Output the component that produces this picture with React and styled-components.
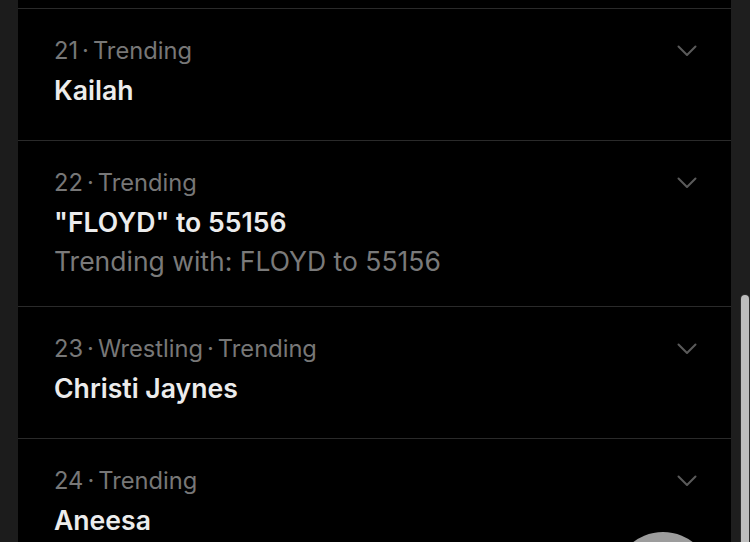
import React from "react";
import styled, { createGlobalStyle } from "styled-components";

const Global = createGlobalStyle`
  html, body { margin: 0; padding: 0; background: #1c1c1c; }
  body { width: 750px; height: 542px; overflow: hidden; font-family: Inter, "Noto Sans", "Liberation Sans", sans-serif; -webkit-font-smoothing: antialiased; }
`;

const Page = styled.div`
  position: relative;
  display: flex;
  width: 750px;
  height: 542px;
  padding-left: 18px;
  box-sizing: border-box;
  overflow: hidden;
  background: #1c1c1c;
`;

const List = styled.div`
  width: 713px;
  background: #000;
  padding-top: 8px;
  display: flex;
  flex-direction: column;
`;

const Row = styled.div`
  display: grid;
  grid-template-columns: 1fr auto;
  border-top: 1px solid #2a2a2a;
  padding: 23px 34px 29px 36px;
  flex-shrink: 0;
`;

const Texts = styled.div`
  display: flex;
  flex-direction: column;
`;

const Meta = styled.div`
  font-size: 23.7px;
  line-height: 38px;
  color: #777;
  white-space: nowrap;
`;

const Dot = styled.span`
  margin: 0 4px;
`;

const Title = styled.div`
  font-size: 26.6px;
  font-weight: 600;
  line-height: 41px;
  color: #ececec;
  white-space: nowrap;
`;

const Sub = styled.div`
  font-size: 26.5px;
  line-height: 36px;
  margin-bottom: -2px;
  color: #7a7a7a;
  white-space: nowrap;
`;

const ChevronBox = styled.div`
  height: 38px;
  display: flex;
  align-items: center;
`;

const Gutter = styled.div`
  flex: 1;
  display: flex;
  flex-direction: column;
  padding-top: 295px;
  padding-left: 10px;
  background: #1e1e1e;
`;

const Thumb = styled.div`
  flex: 1;
  width: 8px;
  border-radius: 5px 5px 0 0;
  background: #bcbcbc;
  box-shadow: 0 0 0 1px #2e2e2e;
`;

const Fab = styled.div`
  position: absolute;
  left: 614px;
  top: 532px;
  width: 98px;
  height: 98px;
  border-radius: 50%;
  background: #9c9c9c;
`;

const Chevron = () => (
  <svg width="20" height="12" viewBox="0 0 20 12" fill="none">
    <polyline points="1.5,1.5 10,10 18.5,1.5" stroke="#5a5a5a" strokeWidth="2" strokeLinecap="round" strokeLinejoin="round" />
  </svg>
);

const items = [
  { n: 21, cats: ["Trending"], title: "Kailah" },
  { n: 22, cats: ["Trending"], title: "\"FLOYD\" to 55156", sub: "Trending with: FLOYD to 55156" },
  { n: 23, cats: ["Wrestling", "Trending"], title: "Christi Jaynes" },
  { n: 24, cats: ["Trending"], title: "Aneesa" },
];

export default function App() {
  return (
    <>
      <Global />
      <Page>
        <List>
          {items.map((it) => (
            <Row key={it.n}>
              <Texts>
                <Meta>
                  {it.n}
                  {it.cats.map((c) => (
                    <React.Fragment key={c}>
                      <Dot>·</Dot>
                      {c}
                    </React.Fragment>
                  ))}
                </Meta>
                <Title>{it.title}</Title>
                {it.sub && <Sub>{it.sub}</Sub>}
              </Texts>
              <ChevronBox>
                <Chevron />
              </ChevronBox>
            </Row>
          ))}
        </List>
        <Gutter>
          <Thumb />
        </Gutter>
        <Fab />
      </Page>
    </>
  );
}
